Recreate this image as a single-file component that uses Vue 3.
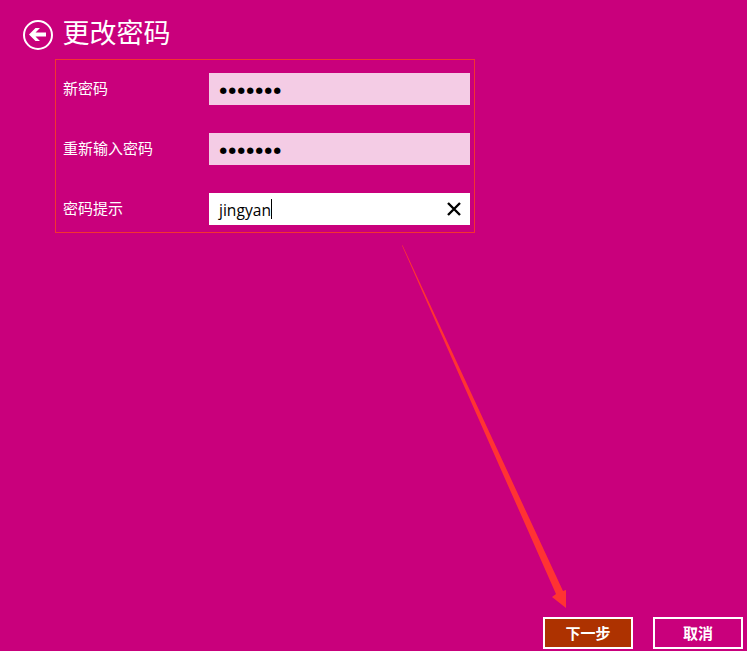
<script setup>
import { ref } from 'vue'

const fields = ref([
  { label: '新密码', value: '●●●●●●●', masked: true },
  { label: '重新输入密码', value: '●●●●●●●', masked: true },
  { label: '密码提示', value: 'jingyan', masked: false },
])
</script>

<template>
  <main class="page">
    <header class="header">
      <svg class="back" viewBox="0 0 32 32" width="32" height="32">
        <circle cx="16" cy="16" r="14" fill="none" stroke="#fff" stroke-width="2" />
        <path d="M7 15.5 13.5 9H18L13.5 13.6H24V17.4H13.5L18 22H13.5Z" fill="#fff" />
      </svg>
      <h1 class="title">更改密码</h1>
    </header>

    <section class="form">
      <div v-for="field in fields" :key="field.label" class="row">
        <span class="label">{{ field.label }}</span>
        <div class="field" :class="{ masked: field.masked }">
          <span class="value">{{ field.value }}</span>
          <template v-if="!field.masked">
            <i class="caret"></i>
            <svg class="clear" viewBox="0 0 16 16" width="16" height="16">
              <path d="M2 2 14 14M14 2 2 14" stroke="#000" stroke-width="2.4" />
            </svg>
          </template>
        </div>
      </div>
    </section>

    <footer class="actions">
      <button class="btn primary">下一步</button>
      <button class="btn">取消</button>
    </footer>

    <svg class="arrow" viewBox="0 0 170 370" width="170" height="370">
      <path d="M2 5.5 2.5 5.2 163 351 166 350V368L152 357 156 354Z" fill="#ff3333" />
    </svg>
  </main>
</template>

<style>
body {
  margin: 0;
  background: #c9007c;
}
</style>

<style scoped>
.page {
  position: relative;
  box-sizing: border-box;
  display: flex;
  flex-direction: column;
  width: 747px;
  height: 651px;
  overflow: hidden;
  background: #c9007c;
  color: #fff;
  font-family: "Open Sans", "Noto Sans CJK SC", sans-serif;
}
.header {
  display: flex;
  align-items: flex-start;
  gap: 8.5px;
  height: 59px;
  padding-left: 22px;
  box-sizing: border-box;
}
.back {
  margin-top: 19px;
}
.title {
  margin: 12px 0 0;
  font: 400 27px/40px "Noto Sans CJK SC", sans-serif;
}
.form {
  box-sizing: border-box;
  display: flex;
  flex-direction: column;
  gap: 28px;
  width: 420px;
  height: 174px;
  margin-left: 55px;
  padding: 13px 4px 0 7px;
  border: 1px solid #f5332f;
}
.row {
  display: flex;
  height: 32px;
}
.label {
  width: 146px;
  font: 15px/29px "Noto Sans CJK SC", sans-serif;
}
.field {
  box-sizing: border-box;
  display: flex;
  align-items: center;
  width: 261px;
  padding: 0 8px 0 10px;
  background: #fff;
  color: #000;
}
.value {
  padding-top: 2px;
  font-size: 15.6px;
  line-height: 22px;
}
.field.masked {
  background: #f4cce5;
}
.masked .value {
  padding: 3px 0 0 0.5px;
  font: 8.5px/29px "DejaVu Sans", sans-serif;
  letter-spacing: 1.6px;
}
.caret {
  width: 1px;
  height: 20px;
  background: #000;
}
.clear {
  margin-left: auto;
}
.actions {
  display: flex;
  justify-content: flex-end;
  gap: 20px;
  margin-top: auto;
  padding: 0 4px 2px 0;
}
.btn {
  box-sizing: border-box;
  width: 90px;
  height: 32px;
  padding: 0;
  border: 2px solid #fff;
  background: transparent;
  color: #fff;
  font: 700 15px/28px "Noto Sans CJK SC", sans-serif;
}
.primary {
  background: #ad3200;
}
.arrow {
  position: absolute;
  left: 400px;
  top: 240px;
}
</style>
